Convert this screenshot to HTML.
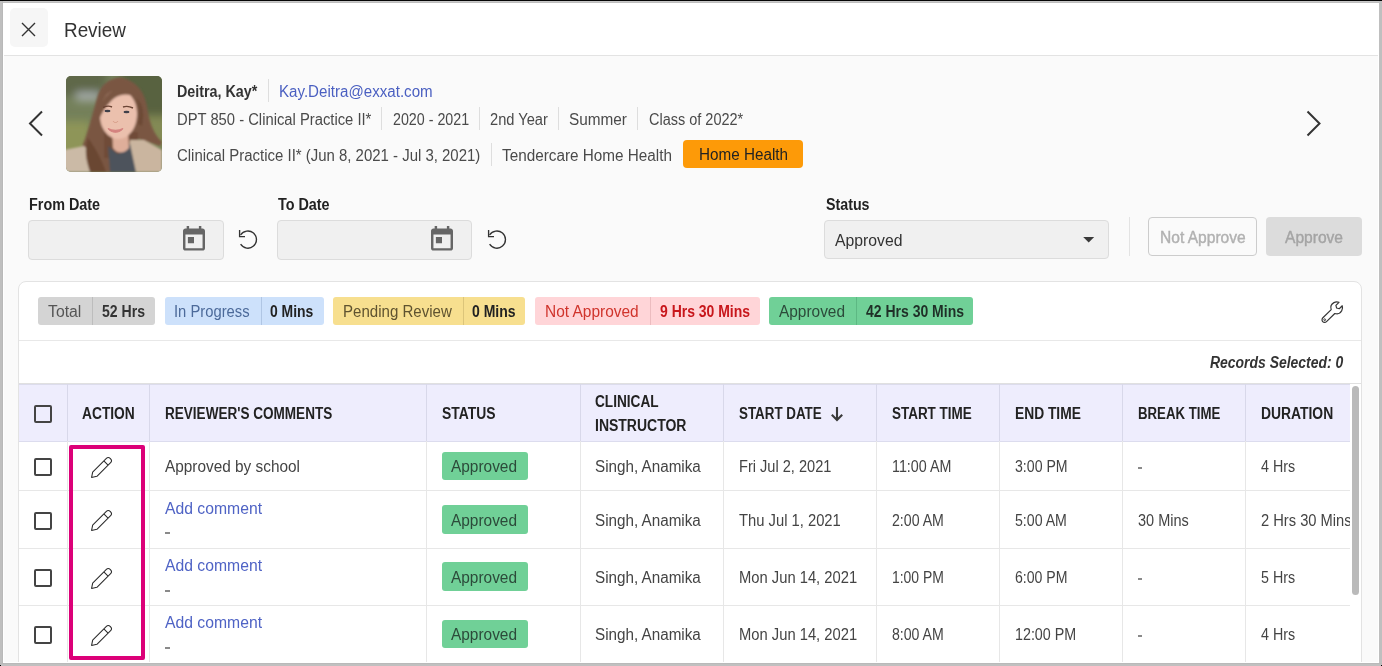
<!DOCTYPE html>
<html><head><meta charset="utf-8"><style>
html,body{margin:0;padding:0;}
body{width:1382px;height:666px;position:relative;overflow:hidden;background:#fafafa;font-family:"Liberation Sans",sans-serif;}
.t{position:absolute;white-space:nowrap;transform-origin:0 50%;}
.r{position:absolute;}
</style></head><body>
<div class="r" style="left:0px;top:0px;width:1382px;height:666px;background:#fafafa;"></div>
<div class="r" style="left:0px;top:0px;width:1382px;height:56px;background:#fff;"></div>
<div class="r" style="left:0px;top:55px;width:1382px;height:1px;background:#e3e3e3;"></div>
<div class="r" style="left:10px;top:8px;width:38px;height:39px;background:#f6f6f6;border-radius:5px;"></div>
<svg class="r" style="left:0;top:0" width="60" height="60"><path d="M22 23 L35 36 M35 23 L22 36" stroke="#333" stroke-width="1.4" fill="none"/></svg>
<div class="t" style="left:63.70px;top:18.05px;font-size:19.5px;line-height:24.38px;color:#333;transform:scaleX(0.9678);">Review</div>
<svg class="r" style="left:0;top:0" width="60" height="160"><path d="M42 111.5 L30 123.5 L42 135.5" stroke="#333" stroke-width="2" fill="none"/></svg>
<svg class="r" style="left:1290px;top:0" width="60" height="160"><path d="M17.5 111.5 L29.5 123.5 L17.5 135.5" stroke="#333" stroke-width="2" fill="none"/></svg>
<svg class="r" style="left:66px;top:76px;" width="96" height="96" viewBox="0 0 96 96">
<defs><filter id="bl" x="-30%" y="-30%" width="160%" height="160%"><feGaussianBlur stdDeviation="4"/></filter>
<filter id="bl2" x="-10%" y="-10%" width="120%" height="120%"><feGaussianBlur stdDeviation="1.1"/></filter>
<filter id="bl3" x="-10%" y="-10%" width="120%" height="120%"><feGaussianBlur stdDeviation="0.6"/></filter>
<clipPath id="cp"><rect width="96" height="96" rx="5"/></clipPath></defs>
<g clip-path="url(#cp)">
<rect width="96" height="96" fill="#74805a"/>
<g filter="url(#bl)">
<rect x="-10" y="-10" width="50" height="30" fill="#5e684a"/>
<rect x="10" y="16" width="24" height="9" fill="#a4aba8"/>
<rect x="55" y="-10" width="50" height="55" fill="#58623f"/>
<rect x="-10" y="45" width="35" height="40" fill="#8e9558"/>
<rect x="75" y="40" width="30" height="30" fill="#838a55"/>
</g>
<g filter="url(#bl2)">
<path d="M55 1.5 C42 2 34 10 31 22 C27 36 24 48 20 60 C16 72 11 82 9 96 L44 96 L46 62 L64 60 L70 62 L94 70 L96 66 C88 58 84 48 82 36 C80 20 74 6 55 1.5 Z" fill="#7a5642"/>
<rect x="38" y="56" width="34" height="26" fill="#6f4c38"/>
<path d="M-2 74 L18 70 L28 80 L32 96 L-2 96 Z" fill="#cbbaa6"/>
<path d="M64 64 L78 64 L96 74 L96 96 L66 96 L62 80 Z" fill="#cab59f"/>
<path d="M42 70 L52 78 L64 68 L70 96 L44 96 Z" fill="#4d535b"/>
<path d="M46 54 L62 54 L63 72 C58 78 51 78 47 72 Z" fill="#dfae9a"/>
<path d="M52 14 C63 14 71 24 71 38 C71 52 63 63 52 63 C42 63 34 52 34 40 C34 26 41 14 52 14 Z" fill="#ebc0ad"/>
<path d="M31 38 C34 26 42 14 56 10 C62 9 68 14 70 22 C62 16 52 18 46 24 C40 30 36 36 33 44 Z" fill="#7a5642"/>
<path d="M70 22 C74 30 74 40 72 48 L76 50 C78 40 78 28 70 22 Z" fill="#6c4a36"/>
<path d="M22 62 C28 70 34 80 40 96 L24 96 C20 84 18 74 22 62 Z" fill="#6a4632"/>
</g>
<g filter="url(#bl3)">
<path d="M37 31.5 C40 30 44 30 46 31 M57 31 C60 30 64 30.5 67 32" stroke="#6a4434" stroke-width="1.4" fill="none"/>
<ellipse cx="41.5" cy="35" rx="3" ry="1.3" fill="#40404a"/>
<ellipse cx="60.5" cy="36" rx="3" ry="1.3" fill="#40404a"/>
<path d="M47 45 C48 47 51 47 52 45" stroke="#d49a86" stroke-width="1" fill="none"/>
<path d="M42 52.5 C46 55 53 55 57 52.5 C53 57.5 46 57.5 42 52.5 Z" fill="#d4827f" stroke="#d4827f" stroke-width="1.2"/>
</g>
</g></svg>
<div class="t" style="left:177.40px;top:81.96px;font-size:16px;line-height:20.0px;color:#333;font-weight:700;transform:scaleX(0.8938);">Deitra, Kay*</div>
<div class="r" style="left:268px;top:79px;width:1px;height:23px;background:#dedede;"></div>
<div class="t" style="left:279.00px;top:81.96px;font-size:16px;line-height:20.0px;color:#4a5fc1;transform:scaleX(0.9444);">Kay.Deitra@exxat.com</div>
<div class="t" style="left:177.20px;top:109.96px;font-size:16px;line-height:20.0px;color:#4a4a4a;transform:scaleX(0.9236);">DPT 850 - Clinical Practice II*</div>
<div class="r" style="left:381px;top:107px;width:1px;height:23px;background:#dedede;"></div>
<div class="t" style="left:392.50px;top:109.96px;font-size:16px;line-height:20.0px;color:#4a4a4a;transform:scaleX(0.8919);">2020 - 2021</div>
<div class="r" style="left:479px;top:107px;width:1px;height:23px;background:#dedede;"></div>
<div class="t" style="left:490.30px;top:109.96px;font-size:16px;line-height:20.0px;color:#4a4a4a;transform:scaleX(0.9146);">2nd Year</div>
<div class="r" style="left:558px;top:107px;width:1px;height:23px;background:#dedede;"></div>
<div class="t" style="left:569.00px;top:109.96px;font-size:16px;line-height:20.0px;color:#4a4a4a;transform:scaleX(0.9590);">Summer</div>
<div class="r" style="left:637px;top:107px;width:1px;height:23px;background:#dedede;"></div>
<div class="t" style="left:648.50px;top:109.96px;font-size:16px;line-height:20.0px;color:#4a4a4a;transform:scaleX(0.9051);">Class of 2022*</div>
<div class="t" style="left:177.20px;top:145.96px;font-size:16px;line-height:20.0px;color:#4a4a4a;transform:scaleX(0.9343);">Clinical Practice II* (Jun 8, 2021 - Jul 3, 2021)</div>
<div class="r" style="left:491px;top:143px;width:1px;height:23px;background:#dedede;"></div>
<div class="t" style="left:502.00px;top:145.96px;font-size:16px;line-height:20.0px;color:#4a4a4a;transform:scaleX(0.9559);">Tendercare Home Health</div>
<div class="r" style="left:683px;top:140px;width:120px;height:28px;background:#fd9a08;border-radius:4px;"></div>
<div class="t" style="left:699.00px;top:144.96px;font-size:16px;line-height:20.0px;color:#222;transform:scaleX(0.9533);">Home Health</div>
<div class="t" style="left:29.40px;top:194.96px;font-size:16px;line-height:20.0px;color:#222;font-weight:700;transform:scaleX(0.8986);">From Date</div>
<div class="t" style="left:277.80px;top:194.96px;font-size:16px;line-height:20.0px;color:#222;font-weight:700;transform:scaleX(0.8971);">To Date</div>
<div class="t" style="left:825.70px;top:194.96px;font-size:16px;line-height:20.0px;color:#222;font-weight:700;transform:scaleX(0.8899);">Status</div>
<div class="r" style="left:28px;top:220px;width:196px;height:40px;background:#f0f0f0;border:1px solid #dcdcdc;border-radius:4px;box-sizing:border-box;"></div>
<svg class="r" style="left:182.8px;top:226.2px" width="22" height="24.6" viewBox="3 1 18 20" preserveAspectRatio="none"><path d="M19 3h-1V1h-2v2H8V1H6v2H5c-1.11 0-1.99.9-1.99 2L3 19c0 1.1.89 2 2 2h14c1.1 0 2-.9 2-2V5c0-1.1-.9-2-2-2zm0 16H5V8h14v11zM7 10h5v5H7z" fill="#666"/></svg>
<svg class="r" style="left:236px;top:228px" width="24" height="24" viewBox="0 0 24 24"><path d="M4.6 7.0 A8.6 8.6 0 1 1 4.6 16.2" fill="none" stroke="#333" stroke-width="1.35"/><path d="M3.6 2 V8.6 H9" fill="none" stroke="#333" stroke-width="1.35"/></svg>
<div class="r" style="left:277px;top:220px;width:195px;height:40px;background:#f0f0f0;border:1px solid #dcdcdc;border-radius:4px;box-sizing:border-box;"></div>
<svg class="r" style="left:430.8px;top:226.2px" width="22" height="24.6" viewBox="3 1 18 20" preserveAspectRatio="none"><path d="M19 3h-1V1h-2v2H8V1H6v2H5c-1.11 0-1.99.9-1.99 2L3 19c0 1.1.89 2 2 2h14c1.1 0 2-.9 2-2V5c0-1.1-.9-2-2-2zm0 16H5V8h14v11zM7 10h5v5H7z" fill="#666"/></svg>
<svg class="r" style="left:484.5px;top:228px" width="24" height="24" viewBox="0 0 24 24"><path d="M4.6 7.0 A8.6 8.6 0 1 1 4.6 16.2" fill="none" stroke="#333" stroke-width="1.35"/><path d="M3.6 2 V8.6 H9" fill="none" stroke="#333" stroke-width="1.35"/></svg>
<div class="r" style="left:824px;top:220px;width:285px;height:39px;background:#f0f0f0;border:1px solid #dcdcdc;border-radius:4px;box-sizing:border-box;"></div>
<div class="t" style="left:834.80px;top:230.96px;font-size:16px;line-height:20.0px;color:#333;transform:scaleX(0.9857);">Approved</div>
<svg class="r" style="left:1082px;top:236px" width="14" height="8"><path d="M1.2 1 L12.2 1 L6.7 6.6 Z" fill="#3a3a3a"/></svg>
<div class="r" style="left:1129px;top:217px;width:1px;height:39px;background:#e3e3e3;"></div>
<div class="r" style="left:1148px;top:217px;width:109px;height:39px;background:#fafafa;border:1px solid #cccccc;border-radius:4px;box-sizing:border-box;"></div>
<div class="t" style="left:1159.70px;top:227.96px;font-size:16px;line-height:20.0px;color:#b1b1b1;transform:scaleX(0.9730);-webkit-text-stroke:0.4px #b1b1b1;">Not Approve</div>
<div class="r" style="left:1266px;top:217px;width:96px;height:39px;background:#dcdcdc;border-radius:4px;"></div>
<div class="t" style="left:1285.00px;top:227.96px;font-size:16px;line-height:20.0px;color:#a4a4a4;transform:scaleX(0.9732);-webkit-text-stroke:0.4px #a4a4a4;">Approve</div>
<div class="r" style="left:18px;top:281px;width:1344px;height:419px;background:#fff;border:1px solid #e3e3e3;border-radius:8px;box-sizing:border-box;"></div>
<div class="r" style="left:38px;top:297px;width:117px;height:28px;background:#d4d4d4;border-radius:3px;"></div>
<div class="r" style="left:92px;top:297px;width:1px;height:28px;background:#bdbdbd;"></div>
<div class="t" style="left:48.40px;top:301.96px;font-size:16px;line-height:20.0px;color:#555;transform:scaleX(0.9864);">Total</div>
<div class="t" style="left:102.00px;top:301.96px;font-size:16px;line-height:20.0px;color:#333;font-weight:700;transform:scaleX(0.8783);">52 Hrs</div>
<div class="r" style="left:164.5px;top:297px;width:159.2px;height:28px;background:#cde1fb;border-radius:3px;"></div>
<div class="r" style="left:260.5px;top:297px;width:1.0px;height:28px;background:#b0c6e4;"></div>
<div class="t" style="left:174.10px;top:301.96px;font-size:16px;line-height:20.0px;color:#4c6a9a;transform:scaleX(0.9238);">In Progress</div>
<div class="t" style="left:270.40px;top:301.96px;font-size:16px;line-height:20.0px;color:#222;font-weight:700;transform:scaleX(0.8702);">0 Mins</div>
<div class="r" style="left:333.3px;top:297px;width:191.7px;height:28px;background:#f7df8f;border-radius:3px;"></div>
<div class="r" style="left:462.5px;top:297px;width:1.0px;height:28px;background:#dcc57a;"></div>
<div class="t" style="left:342.90px;top:301.96px;font-size:16px;line-height:20.0px;color:#5f5330;transform:scaleX(0.9414);">Pending Review</div>
<div class="t" style="left:472.00px;top:301.96px;font-size:16px;line-height:20.0px;color:#222;font-weight:700;transform:scaleX(0.8742);">0 Mins</div>
<div class="r" style="left:535px;top:297px;width:224.70000000000005px;height:28px;background:#ffd5d8;border-radius:3px;"></div>
<div class="r" style="left:649.5px;top:297px;width:1.0px;height:28px;background:#ecbcbf;"></div>
<div class="t" style="left:545.40px;top:301.96px;font-size:16px;line-height:20.0px;color:#d0342c;transform:scaleX(0.9664);">Not Approved</div>
<div class="t" style="left:660.00px;top:301.96px;font-size:16px;line-height:20.0px;color:#c8161b;font-weight:700;transform:scaleX(0.8728);">9 Hrs 30 Mins</div>
<div class="r" style="left:769.4px;top:297px;width:203.89999999999998px;height:28px;background:#70d097;border-radius:3px;"></div>
<div class="r" style="left:855.5px;top:297px;width:1.0px;height:28px;background:#5db883;"></div>
<div class="t" style="left:778.80px;top:301.96px;font-size:16px;line-height:20.0px;color:#2c4a3a;transform:scaleX(0.9638);">Approved</div>
<div class="t" style="left:865.60px;top:301.96px;font-size:16px;line-height:20.0px;color:#1f2f27;font-weight:700;transform:scaleX(0.8744);">42 Hrs 30 Mins</div>
<svg class="r" style="left:1320.3px;top:300px" width="23.5" height="23.5" viewBox="0 0 26 26"><path d="M3.2 19.6 L12.4 10.6 C11.4 7.6 12.6 4.4 15.4 2.9 C17.2 2 19.2 1.9 21 2.6 L17.6 6 L18.4 8.9 L21.3 9.7 L24.6 6.4 C25.2 8.2 25 10.3 24 12 C22.6 14.6 19.4 15.8 16.4 14.9 L7.2 23.9 C6 25.1 4.1 25.1 3 23.9 C1.9 22.8 2 20.8 3.2 19.6 Z" fill="none" stroke="#333" stroke-width="1.3" stroke-linejoin="round"/><circle cx="5.2" cy="21.8" r="1" fill="none" stroke="#333" stroke-width="1"/></svg>
<div class="r" style="left:19px;top:340px;width:1342px;height:1px;background:#e8e8e8;"></div>
<div class="t" style="left:1209.80px;top:352.96px;font-size:16px;line-height:20.0px;color:#333;font-weight:700;font-style:italic;transform:scaleX(0.8715);">Records Selected: 0</div>
<div class="r" style="left:19px;top:383px;width:1342px;height:1px;background:#e0e0e0;"></div>
<div class="r" style="left:19px;top:384px;width:1331px;height:58px;background:#eeedfd;"></div>
<div class="r" style="left:19px;top:384px;width:1331px;height:1px;background:#dcdcec;"></div>
<div class="r" style="left:19px;top:441px;width:1331px;height:1px;background:#dcdcee;"></div>
<div class="r" style="left:67px;top:384px;width:1px;height:279px;background:#e7e7e7;"></div>
<div class="r" style="left:149px;top:384px;width:1px;height:279px;background:#e7e7e7;"></div>
<div class="r" style="left:426px;top:384px;width:1px;height:279px;background:#e7e7e7;"></div>
<div class="r" style="left:580px;top:384px;width:1px;height:279px;background:#e7e7e7;"></div>
<div class="r" style="left:723px;top:384px;width:1px;height:279px;background:#e7e7e7;"></div>
<div class="r" style="left:876px;top:384px;width:1px;height:279px;background:#e7e7e7;"></div>
<div class="r" style="left:999px;top:384px;width:1px;height:279px;background:#e7e7e7;"></div>
<div class="r" style="left:1122px;top:384px;width:1px;height:279px;background:#e7e7e7;"></div>
<div class="r" style="left:1245px;top:384px;width:1px;height:279px;background:#e7e7e7;"></div>
<div class="r" style="left:67px;top:384px;width:1px;height:57px;background:#d8d8ea;"></div>
<div class="r" style="left:149px;top:384px;width:1px;height:57px;background:#d8d8ea;"></div>
<div class="r" style="left:426px;top:384px;width:1px;height:57px;background:#d8d8ea;"></div>
<div class="r" style="left:580px;top:384px;width:1px;height:57px;background:#d8d8ea;"></div>
<div class="r" style="left:723px;top:384px;width:1px;height:57px;background:#d8d8ea;"></div>
<div class="r" style="left:876px;top:384px;width:1px;height:57px;background:#d8d8ea;"></div>
<div class="r" style="left:999px;top:384px;width:1px;height:57px;background:#d8d8ea;"></div>
<div class="r" style="left:1122px;top:384px;width:1px;height:57px;background:#d8d8ea;"></div>
<div class="r" style="left:1245px;top:384px;width:1px;height:57px;background:#d8d8ea;"></div>
<div class="r" style="left:19px;top:490px;width:1331px;height:1px;background:#e7e7e7;"></div>
<div class="r" style="left:19px;top:548px;width:1331px;height:1px;background:#e7e7e7;"></div>
<div class="r" style="left:19px;top:605px;width:1331px;height:1px;background:#e7e7e7;"></div>
<div class="r" style="left:34px;top:405px;width:18px;height:18px;border:2px solid #444;border-radius:2px;box-sizing:border-box;"></div>
<div class="t" style="left:82.00px;top:403.96px;font-size:16px;line-height:20.0px;color:#222;font-weight:700;transform:scaleX(0.8605);">ACTION</div>
<div class="t" style="left:165.00px;top:403.96px;font-size:16px;line-height:20.0px;color:#222;font-weight:700;transform:scaleX(0.8462);">REVIEWER'S COMMENTS</div>
<div class="t" style="left:441.50px;top:403.96px;font-size:16px;line-height:20.0px;color:#222;font-weight:700;transform:scaleX(0.8685);">STATUS</div>
<div class="t" style="left:595.40px;top:391.96px;font-size:16px;line-height:20.0px;color:#222;font-weight:700;transform:scaleX(0.8521);">CLINICAL</div>
<div class="t" style="left:595.40px;top:415.96px;font-size:16px;line-height:20.0px;color:#222;font-weight:700;transform:scaleX(0.8741);">INSTRUCTOR</div>
<div class="t" style="left:738.50px;top:403.96px;font-size:16px;line-height:20.0px;color:#222;font-weight:700;transform:scaleX(0.8357);">START DATE</div>
<svg class="r" style="left:828.5px;top:405px" width="16" height="18"><path d="M8 2 V15 M2.8 9.8 L8 15 L13.2 9.8" fill="none" stroke="#3a3a3a" stroke-width="2.1"/></svg>
<div class="t" style="left:892.20px;top:403.96px;font-size:16px;line-height:20.0px;color:#222;font-weight:700;transform:scaleX(0.8407);">START TIME</div>
<div class="t" style="left:1014.50px;top:403.96px;font-size:16px;line-height:20.0px;color:#222;font-weight:700;transform:scaleX(0.8617);">END TIME</div>
<div class="t" style="left:1137.90px;top:403.96px;font-size:16px;line-height:20.0px;color:#222;font-weight:700;transform:scaleX(0.8260);">BREAK TIME</div>
<div class="t" style="left:1260.90px;top:403.96px;font-size:16px;line-height:20.0px;color:#222;font-weight:700;transform:scaleX(0.8670);">DURATION</div>
<div class="r" style="left:34px;top:458px;width:18px;height:18px;border:2px solid #444;border-radius:2px;box-sizing:border-box;"></div>
<svg class="r" style="left:89.3px;top:456px" width="24" height="24" viewBox="-12 -12 24 24"><g transform="rotate(-45)"><path d="M-13.3 0 L-8.8 -3 L10.6 -3 Q13.3 -3 13.3 0 Q13.3 3 10.6 3 L-8.8 3 Z M7.0 -3 L7.0 3" fill="none" stroke="#2a2a2a" stroke-width="1.05" stroke-linejoin="round"/></g></svg>
<div class="t" style="left:165.00px;top:456.96px;font-size:16px;line-height:20.0px;color:#444;transform:scaleX(0.9604);">Approved by school</div>
<div class="r" style="left:441.5px;top:451.7px;width:86.20000000000005px;height:28.5px;background:#70d097;border-radius:3px;"></div>
<div class="t" style="left:451.30px;top:456.96px;font-size:16px;line-height:20.0px;color:#2c4a3a;transform:scaleX(0.9638);">Approved</div>
<div class="t" style="left:595.40px;top:456.96px;font-size:16px;line-height:20.0px;color:#444;transform:scaleX(0.9517);">Singh, Anamika</div>
<div class="t" style="left:738.50px;top:456.96px;font-size:16px;line-height:20.0px;color:#444;transform:scaleX(0.9116);">Fri Jul 2, 2021</div>
<div class="t" style="left:892.20px;top:456.96px;font-size:16px;line-height:20.0px;color:#444;transform:scaleX(0.8931);">11:00 AM</div>
<div class="t" style="left:1014.50px;top:456.96px;font-size:16px;line-height:20.0px;color:#444;transform:scaleX(0.8826);">3:00 PM</div>
<div class="r" style="left:1138px;top:467px;width:4px;height:2px;background:#8a8a8a;"></div>
<div class="t" style="left:1260.90px;top:456.96px;font-size:16px;line-height:20.0px;color:#444;transform:scaleX(0.8917);">4 Hrs</div>
<div class="r" style="left:34px;top:512px;width:18px;height:18px;border:2px solid #444;border-radius:2px;box-sizing:border-box;"></div>
<svg class="r" style="left:89.3px;top:509.4px" width="24" height="24" viewBox="-12 -12 24 24"><g transform="rotate(-45)"><path d="M-13.3 0 L-8.8 -3 L10.6 -3 Q13.3 -3 13.3 0 Q13.3 3 10.6 3 L-8.8 3 Z M7.0 -3 L7.0 3" fill="none" stroke="#2a2a2a" stroke-width="1.05" stroke-linejoin="round"/></g></svg>
<div class="t" style="left:165.00px;top:498.96px;font-size:16px;line-height:20.0px;color:#4f63c5;transform:scaleX(0.9826);">Add comment</div>
<div class="r" style="left:165px;top:532px;width:5px;height:2px;background:#8a8a8a;"></div>
<div class="r" style="left:441.5px;top:505.1px;width:86.20000000000005px;height:28.5px;background:#70d097;border-radius:3px;"></div>
<div class="t" style="left:451.30px;top:510.96px;font-size:16px;line-height:20.0px;color:#2c4a3a;transform:scaleX(0.9638);">Approved</div>
<div class="t" style="left:595.40px;top:510.96px;font-size:16px;line-height:20.0px;color:#444;transform:scaleX(0.9517);">Singh, Anamika</div>
<div class="t" style="left:738.50px;top:510.96px;font-size:16px;line-height:20.0px;color:#444;transform:scaleX(0.9228);">Thu Jul 1, 2021</div>
<div class="t" style="left:892.20px;top:510.96px;font-size:16px;line-height:20.0px;color:#444;transform:scaleX(0.8839);">2:00 AM</div>
<div class="t" style="left:1014.50px;top:510.96px;font-size:16px;line-height:20.0px;color:#444;transform:scaleX(0.8839);">5:00 AM</div>
<div class="t" style="left:1137.90px;top:510.96px;font-size:16px;line-height:20.0px;color:#444;transform:scaleX(0.9054);">30 Mins</div>
<div class="t" style="left:1260.90px;top:510.96px;font-size:16px;line-height:20.0px;color:#444;transform:scaleX(0.9177);">2 Hrs 30 Mins</div>
<div class="r" style="left:34px;top:569px;width:18px;height:18px;border:2px solid #444;border-radius:2px;box-sizing:border-box;"></div>
<svg class="r" style="left:89.3px;top:566.5px" width="24" height="24" viewBox="-12 -12 24 24"><g transform="rotate(-45)"><path d="M-13.3 0 L-8.8 -3 L10.6 -3 Q13.3 -3 13.3 0 Q13.3 3 10.6 3 L-8.8 3 Z M7.0 -3 L7.0 3" fill="none" stroke="#2a2a2a" stroke-width="1.05" stroke-linejoin="round"/></g></svg>
<div class="t" style="left:165.00px;top:555.96px;font-size:16px;line-height:20.0px;color:#4f63c5;transform:scaleX(0.9826);">Add comment</div>
<div class="r" style="left:165px;top:590px;width:5px;height:2px;background:#8a8a8a;"></div>
<div class="r" style="left:441.5px;top:562.2px;width:86.20000000000005px;height:28.5px;background:#70d097;border-radius:3px;"></div>
<div class="t" style="left:451.30px;top:567.96px;font-size:16px;line-height:20.0px;color:#2c4a3a;transform:scaleX(0.9638);">Approved</div>
<div class="t" style="left:595.40px;top:567.96px;font-size:16px;line-height:20.0px;color:#444;transform:scaleX(0.9517);">Singh, Anamika</div>
<div class="t" style="left:738.50px;top:567.96px;font-size:16px;line-height:20.0px;color:#444;transform:scaleX(0.9221);">Mon Jun 14, 2021</div>
<div class="t" style="left:892.20px;top:567.96px;font-size:16px;line-height:20.0px;color:#444;transform:scaleX(0.8708);">1:00 PM</div>
<div class="t" style="left:1014.50px;top:567.96px;font-size:16px;line-height:20.0px;color:#444;transform:scaleX(0.8809);">6:00 PM</div>
<div class="r" style="left:1138px;top:578px;width:4px;height:2px;background:#8a8a8a;"></div>
<div class="t" style="left:1260.90px;top:567.96px;font-size:16px;line-height:20.0px;color:#444;transform:scaleX(0.8917);">5 Hrs</div>
<div class="r" style="left:34px;top:626px;width:18px;height:18px;border:2px solid #444;border-radius:2px;box-sizing:border-box;"></div>
<svg class="r" style="left:89.3px;top:624px" width="24" height="24" viewBox="-12 -12 24 24"><g transform="rotate(-45)"><path d="M-13.3 0 L-8.8 -3 L10.6 -3 Q13.3 -3 13.3 0 Q13.3 3 10.6 3 L-8.8 3 Z M7.0 -3 L7.0 3" fill="none" stroke="#2a2a2a" stroke-width="1.05" stroke-linejoin="round"/></g></svg>
<div class="t" style="left:165.00px;top:612.96px;font-size:16px;line-height:20.0px;color:#4f63c5;transform:scaleX(0.9826);">Add comment</div>
<div class="r" style="left:165px;top:647px;width:5px;height:2px;background:#8a8a8a;"></div>
<div class="r" style="left:441.5px;top:619.7px;width:86.20000000000005px;height:28.5px;background:#70d097;border-radius:3px;"></div>
<div class="t" style="left:451.30px;top:624.96px;font-size:16px;line-height:20.0px;color:#2c4a3a;transform:scaleX(0.9638);">Approved</div>
<div class="t" style="left:595.40px;top:624.96px;font-size:16px;line-height:20.0px;color:#444;transform:scaleX(0.9517);">Singh, Anamika</div>
<div class="t" style="left:738.50px;top:624.96px;font-size:16px;line-height:20.0px;color:#444;transform:scaleX(0.9221);">Mon Jun 14, 2021</div>
<div class="t" style="left:892.20px;top:624.96px;font-size:16px;line-height:20.0px;color:#444;transform:scaleX(0.8822);">8:00 AM</div>
<div class="t" style="left:1014.50px;top:624.96px;font-size:16px;line-height:20.0px;color:#444;transform:scaleX(0.8922);">12:00 PM</div>
<div class="r" style="left:1138px;top:635px;width:4px;height:2px;background:#8a8a8a;"></div>
<div class="t" style="left:1260.90px;top:624.96px;font-size:16px;line-height:20.0px;color:#444;transform:scaleX(0.8917);">4 Hrs</div>
<div class="r" style="left:1350px;top:384px;width:11px;height:279px;background:#fff;"></div>
<div class="r" style="left:1352px;top:386px;width:7px;height:209px;background:#bababa;border-radius:4px;"></div>
<div class="r" style="left:69px;top:445px;width:76px;height:215px;border:4px solid #dc0078;box-sizing:border-box;border-radius:2px;"></div>
<div class="r" style="left:3px;top:0px;width:1376px;height:663px;border-left:1px solid #fff;border-right:1px solid #fff;border-bottom:1px solid #fff;box-sizing:border-box;"></div>
<div class="r" style="left:0px;top:1px;width:1382px;height:1px;background:#c8c8c8;"></div>
<div class="r" style="left:0px;top:2px;width:1382px;height:1px;background:#bebebe;"></div>
<div class="r" style="left:0px;top:0px;width:3px;height:666px;background:#bfbfbf;"></div>
<div class="r" style="left:2px;top:0px;width:1px;height:663px;background:#b9b9b9;"></div>
<div class="r" style="left:1379px;top:0px;width:3px;height:666px;background:#bfbfbf;"></div>
<div class="r" style="left:0px;top:663px;width:1382px;height:1px;background:#b9b9b9;"></div>
<div class="r" style="left:0px;top:664px;width:1382px;height:2px;background:#c0c0c0;"></div>
<div class="r" style="left:0px;top:0px;width:1382px;height:1px;background:#050505;"></div>
<div class="r" style="left:0px;top:665px;width:1px;height:1px;background:#000;"></div>
<div class="r" style="left:1381px;top:665px;width:1px;height:1px;background:#000;"></div>
</body></html>
